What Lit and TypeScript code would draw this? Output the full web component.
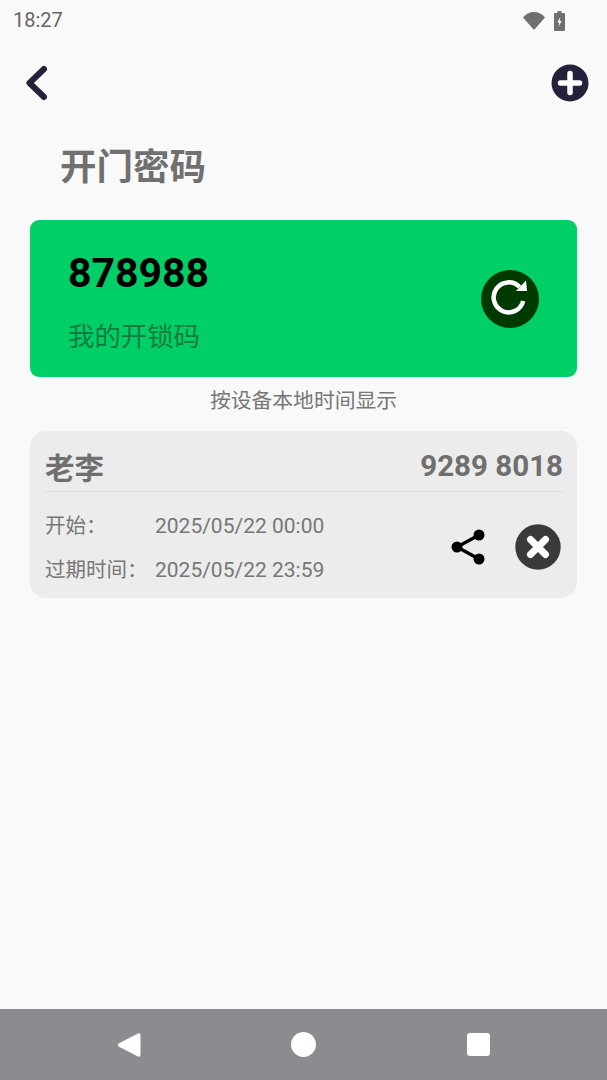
import { LitElement, html, css } from "lit";
import { customElement } from "lit/decorators.js";

@customElement("app-root")
export class AppRoot extends LitElement {
  static styles = css`
    :host { display: block; width: 607px; height: 1080px; }
    * { box-sizing: border-box; }
    .page { width: 607px; height: 1080px; background: #f9f9f9; display: flex; flex-direction: column;
      font-family: Roboto, "Noto Sans CJK SC", sans-serif; color: #707070; }
    .main { flex: 1; display: flex; flex-direction: column; min-height: 0; }
    .status { height: 41px; padding: 0 42px 0 13px; display: flex; align-items: center; justify-content: space-between; }
    .time { font-size: 20px; color: #666; line-height: 41px; }
    .status-icons { display: flex; align-items: center; gap: 9px; }
    svg { display: block; flex: none; }
    .top { height: 58px; margin-top: 13px; padding: 0 18px 0 22px; display: flex; align-items: center; justify-content: space-between; }
    h1 { margin: 31px 0 0; padding-left: 60px; height: 50px; font-size: 36.5px; line-height: 50px; font-weight: 700; color: #707070; }
    .code-card { margin: 27px 30px 0; height: 157px; border-radius: 9px; background: #00cf67; padding: 0 38px; display: flex; align-items: center; justify-content: space-between; }
    .code-text { padding-top: 6px; }
    .code { font-size: 41px; line-height: 48px; font-weight: 700; color: #000; }
    .code-label { margin-top: 22px; font-size: 26.4px; line-height: 36px; color: #157a40; }
    .hint { text-align: center; font-size: 20.8px; line-height: 30px; margin-top: 9px; color: #777; }
    .pw-card { margin: 15px 30px 0; height: 167px; border-radius: 16px; background: #ececec; padding: 0 14px 0 15px; display: flex; flex-direction: column; }
    .pw-head { height: 61px; padding-top: 10px; display: flex; align-items: center; justify-content: space-between; border-bottom: 1px solid #dcdcdc; font-weight: 700; color: #6f6f6f; }
    .name { font-size: 29.5px; }
    .num { font-size: 29.5px; }
    .pw-body { flex: 1; padding-top: 4px; display: flex; align-items: center; justify-content: space-between; }
    .rows { display: flex; flex-direction: column; gap: 14px; margin-top: 2px; }
    .row { display: flex; font-size: 20.5px; line-height: 30px; color: #777; }
    .row span:first-child { width: 110px; }
    .row span:last-child { font-size: 21px; }
    .actions { display: flex; align-items: center; gap: 29px; padding-right: 2px; }
    .nav { height: 71px; background: #8b8c8f; display: grid; grid-template-columns: 1fr 1fr 1fr; padding: 0 41px; align-items: center; }
    .nav > svg { justify-self: center; }
  `;

  render() {
    return html`
      <div class="page">
        <div class="main">
          <div class="status">
            <span class="time">18:27</span>
            <div class="status-icons">
              <svg width="22" height="18" viewBox="0 0 22 18"><path d="M11 18 0 5.5Q4.5 0 11 0T22 5.5Z" fill="#6f6f6f"/></svg>
              <svg width="11" height="20" viewBox="0 0 11 20"><path d="M3.5 0H7.5V2H10Q11 2 11 3V19Q11 20 10 20H1Q0 20 0 19V3Q0 2 1 2H3.5Z" fill="#6f6f6f"/><path d="M6.3 6 3.3 11.5H5.2L4.6 15.5 7.7 10H5.7Z" fill="#f9f9f9"/></svg>
            </div>
          </div>
          <div class="top">
            <svg width="30" height="40" viewBox="0 0 30 40"><path d="M22 6 7.5 20 22 34" fill="none" stroke="#24223a" stroke-width="6" stroke-linecap="round" stroke-linejoin="round"/></svg>
            <svg width="38" height="38" viewBox="0 0 38 38"><circle cx="19" cy="19" r="18.5" fill="#24223a"/><path d="M19 9.5V28.5M9.5 19H28.5" stroke="#fff" stroke-width="5.5" stroke-linecap="round"/></svg>
          </div>
          <h1>开门密码</h1>
          <div class="code-card">
            <div class="code-text">
              <div class="code">878988</div>
              <div class="code-label">我的开锁码</div>
            </div>
            <svg width="58" height="58" viewBox="0 0 58 58"><circle cx="29" cy="29" r="29" fill="#003a00"/><path d="M38.5 17A15 15 0 1 0 42.2 31" fill="none" stroke="#fff" stroke-width="4.5"/><path d="M35 21H46L45 10.5Z" fill="#fff"/></svg>
          </div>
          <div class="hint">按设备本地时间显示</div>
          <div class="pw-card">
            <div class="pw-head"><span class="name">老李</span><span class="num">9289 8018</span></div>
            <div class="pw-body">
              <div class="rows">
                <div class="row"><span>开始：</span><span>2025/05/22 00:00</span></div>
                <div class="row"><span>过期时间：</span><span>2025/05/22 23:59</span></div>
              </div>
              <div class="actions">
                <svg width="36" height="36" viewBox="0 0 36 36"><path d="M29 6 7 18 29 30" fill="none" stroke="#000" stroke-width="3.3"/><circle cx="29" cy="6" r="5.5"/><circle cx="7" cy="18" r="5.5"/><circle cx="29" cy="30" r="5.5"/></svg>
                <svg width="46" height="46" viewBox="0 0 46 46"><circle cx="23" cy="23" r="22.7" fill="#3a3a3a"/><path d="M15.5 15.5 30.5 30.5M30.5 15.5 15.5 30.5" stroke="#fff" stroke-width="7" stroke-linecap="round"/></svg>
              </div>
            </div>
          </div>
        </div>
        <div class="nav">
          <svg width="26" height="26" viewBox="0 0 26 26"><path d="M22 1.5Q24.5 .5 24.5 3.5V22.5Q24.5 25.5 22 24.5L2.5 14.5Q1 13 2.5 11.5Z" fill="#fff"/></svg>
          <svg width="25" height="25" viewBox="0 0 25 25"><circle cx="12.5" cy="12.5" r="12.5" fill="#fff"/></svg>
          <svg width="23" height="23" viewBox="0 0 23 23"><rect width="23" height="23" rx="3" fill="#fff"/></svg>
        </div>
      </div>
    `;
  }
}
